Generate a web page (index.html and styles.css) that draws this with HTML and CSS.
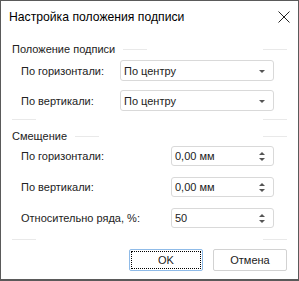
FILE: index.html
```html
<!DOCTYPE html>
<html lang="ru">
<head>
  <meta charset="UTF-8" />
  <title>Настройка положения подписи</title>
  <link rel="stylesheet" href="styles.css">
</head>
<body>

  <div class="dialog">
    <div class="titlebar">
      <span class="title">Настройка положения подписи</span>
      <svg class="close" width="12" height="12" viewBox="0 0 12 12">
        <path d="M0.5 0.5 L11.5 11.5 M11.5 0.5 L0.5 11.5" stroke="#222" stroke-width="1" fill="none" />
      </svg>
    </div>

    <div class="content">
      <div class="group-head first">
        <span class="group-title">Положение подписи</span>
        <span class="line"></span>
        <span class="fill"></span>
        <span class="line"></span>
      </div>
      <div class="row pos-row">
        <label>По горизонтали:</label>
        <div class="select">По центру<span class="arrow"></span></div>
      </div>
      <div class="row pos-row">
        <label>По вертикали:</label>
        <div class="select">По центру<span class="arrow"></span></div>
      </div>
      <div class="group-foot">
        <span class="line"></span>
        <span class="fill"></span>
        <span class="line"></span>
      </div>

      <div class="group-head second">
        <span class="group-title">Смещение</span>
        <span class="line"></span>
        <span class="fill"></span>
        <span class="line"></span>
      </div>
      <div class="row off-row">
        <label>По горизонтали:</label>
        <div class="spin">0,00 мм<span class="spin-arrows"><i class="up"></i><i class="down"></i></span></div>
      </div>
      <div class="row off-row">
        <label>По вертикали:</label>
        <div class="spin">0,00 мм<span class="spin-arrows"><i class="up"></i><i class="down"></i></span></div>
      </div>
      <div class="row off-row">
        <label>Относительно ряда, %:</label>
        <div class="spin">50<span class="spin-arrows"><i class="up"></i><i class="down"></i></span></div>
      </div>
      <div class="group-foot last">
        <span class="line"></span>
        <span class="fill"></span>
        <span class="line"></span>
      </div>

      <div class="buttons">
        <button class="btn default"><span>OK</span></button>
        <button class="btn">Отмена</button>
      </div>
    </div>
  </div>

</body>
</html>
```

FILE: styles.css
```css
/* Basic reset */
* {
  margin: 0;
  padding: 0;
  box-sizing: border-box;
}

body {
  font-family: "Liberation Sans", Arial, sans-serif;
  font-size: 11px;
  color: #222;
  background: #fff;
}

.dialog {
  width: 299px;
  height: 281px;
  border: 1px solid #5a5a5a;
  border-bottom-width: 2px;
  background: #fff;
}

.titlebar {
  height: 31px;
  display: flex;
  align-items: center;
  padding: 0 8px 0 8px;
}

.title {
  font-size: 12.2px;
  color: #000;
  flex: 1;
}

.content {
  padding: 0 11px;
}

/* group headers with faded lines */
.group-head,
.group-foot {
  display: flex;
  align-items: center;
}

.group-head {
  height: 14px;
}

.group-head.first {
  margin-top: 10px;
}

.group-head.second {
  margin-top: 9px;
}

.group-title {
  line-height: 14px;
  margin-right: 8px;
}

.line {
  width: 24px;
  height: 1px;
  background: #e9e9e9;
}

.fill {
  flex: 1;
}

.group-foot {
  height: 1px;
  margin-top: 8px;
}

.group-foot.last {
  margin-top: 11px;
}

/* rows */
.row {
  display: flex;
  align-items: center;
  padding-left: 9px;
  padding-right: 13px;
}

.row label {
  flex: 1;
}

.pos-row {
  height: 21px;
  margin-top: 9px;
}

.pos-row:nth-child(2) {
  margin-top: 4px;
}

.off-row {
  height: 20px;
  margin-top: 11px;
}

.group-head.second + .off-row {
  margin-top: 3px;
}

.select,
.spin {
  position: relative;
  height: 100%;
  border: 1px solid #d9d9d9;
  border-radius: 3px;
  display: flex;
  align-items: center;
  padding-left: 3px;
}

.select {
  width: 154px;
}

.spin {
  width: 103px;
}

.arrow {
  position: absolute;
  right: 8px;
  top: 9px;
  border-left: 3px solid transparent;
  border-right: 3px solid transparent;
  border-top: 3px solid #555;
}

.spin-arrows {
  position: absolute;
  right: 8px;
  top: 5px;
  display: flex;
  flex-direction: column;
  gap: 3px;
}

.spin-arrows i {
  display: block;
  border-left: 3px solid transparent;
  border-right: 3px solid transparent;
}

.spin-arrows .up {
  border-bottom: 3px solid #555;
}

.spin-arrows .down {
  border-top: 3px solid #555;
}

/* buttons */
.buttons {
  display: flex;
  justify-content: flex-end;
  gap: 10px;
  margin-top: 9px;
}

.btn {
  width: 74px;
  height: 22px;
  font-family: inherit;
  font-size: 11px;
  color: #222;
  background: #fff;
  border: 1px solid #d2d2d2;
  border-radius: 2px;
}

.btn.default {
  border-color: #8fbbe8;
  padding: 1px;
}

.btn.default span {
  display: flex;
  align-items: center;
  justify-content: center;
  height: 100%;
  border: 1px dotted #000;
}
```
